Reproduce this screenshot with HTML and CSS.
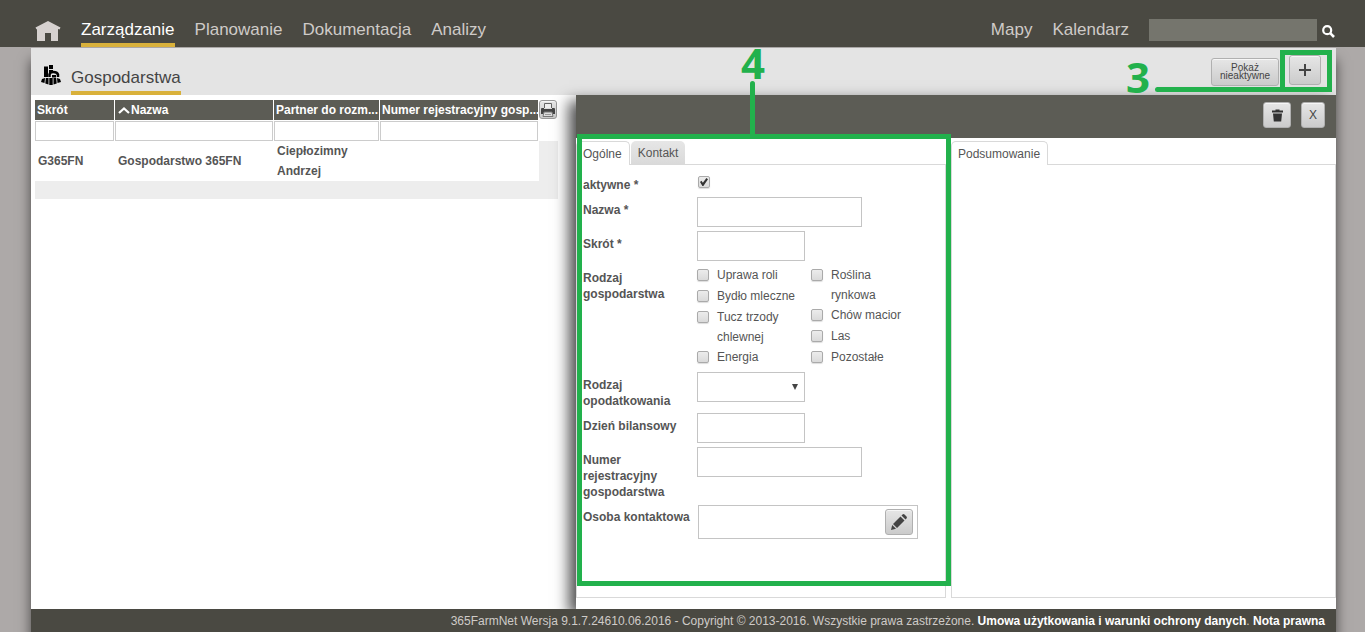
FILE: index.html
```html
<!DOCTYPE html>
<html lang="pl">
<head>
<meta charset="utf-8">
<title>365FarmNet – Gospodarstwa</title>
<link rel="stylesheet" href="styles.css">
</head>
<body>
<header class="topbar">
  <a class="home" href="#" aria-label="Start">
    <svg width="26" height="20" viewBox="0 0 26 20"><path d="M13 0 25.500 6.500 24.500 8.500 23 8V20H16V12H10V20H2V8L1.500 8.500.500 6.500Z" fill="#d6d1cf"/></svg>
  </a>
  <nav class="nav">
    <a class="nav-link is-active" href="#">Zarządzanie</a>
    <a class="nav-link" href="#">Planowanie</a>
    <a class="nav-link" href="#">Dokumentacja</a>
    <a class="nav-link" href="#">Analizy</a>
  </nav>
  <nav class="nav nav-right">
    <a class="nav-link" href="#">Mapy</a>
    <a class="nav-link" href="#">Kalendarz</a>
  </nav>
  <form class="search">
    <input class="search-input" type="search" aria-label="Szukaj">
    <button class="search-btn" type="button" aria-label="Szukaj">
      <svg width="13" height="13" viewBox="0 0 13 13" fill="none" stroke="#fff"><circle cx="5.200" cy="5.200" r="4" stroke-width="2.200"/><path d="M8.200 8.200 12 12" stroke-width="2.600"/></svg>
    </button>
  </form>
</header>

<div class="page">
  <div class="subbar">
    <svg class="farm-icon" width="20" height="20" viewBox="0 0 20 20">
      <path d="M3 1.500H7V12H3ZM8 0H12V4H8ZM8 5H12V6L8 9Z" fill="#000"/>
      <path d="M8.500 12V9.500Q9 7 12.500 7T17 9.500V12" fill="none" stroke="#000" stroke-width="2.500"/>
      <path d="M11 10H15V12.500H11Z" fill="#000"/>
      <path d="M1 14 4 13 3.500 18 0 17ZM4.800 13H7.500V19.500L4.300 18.500ZM8.300 13H11.700V20H8.300ZM12.500 13H15.200L15.700 18.500 12.500 19.500ZM16 13 19 14 20 17 16.500 18Z" fill="#000"/>
    </svg>
    <h1 class="title">Gospodarstwa</h1>
    <div class="subbar-actions">
      <div class="callout-number callout-three">3</div>
      <div class="callout-line-three"></div>
      <button class="btn btn-toggle" type="button">Pokaż nieaktywne</button>
      <div class="add">
        <button class="btn btn-add" type="button" aria-label="Dodaj">
          <svg width="12" height="12" viewBox="0 0 12 12"><path d="M6 0V12M0 6H12" stroke="#444" stroke-width="2"/></svg>
        </button>
        <div class="add-frame"></div>
      </div>
    </div>
  </div>

  <div class="workspace">
    <section class="list">
      <table class="farms">
        <colgroup><col class="c-short"><col class="c-name"><col class="c-partner"><col class="c-number"><col class="c-tools"></colgroup>
        <thead>
          <tr class="head-row">
            <th scope="col">Skrót</th>
            <th scope="col"><svg class="sort" width="12" height="7" viewBox="0 0 12 7"><path d="M1 6 6 1.500 11 6" fill="none" stroke="#fff" stroke-width="2.200"/></svg>Nazwa</th>
            <th scope="col">Partner do rozm...</th>
            <th scope="col">Numer rejestracyjny gosp...</th>
            <td class="tools">
              <button class="btn btn-print" type="button" aria-label="Drukuj">
                <svg width="14" height="14" viewBox="0 0 14 14"><path d="M3.500 5V.500H10.500V5" fill="#eee" stroke="#666" /><path d="M1 5H3V6H11V5H13Q14 5 14 6V11H0V6Q0 5 1 5Z" fill="#444"/><path d="M3 9H11L12 13.500H2Z" fill="#ddd" stroke="#777"/><path d="M4 11.500H10" stroke="#999"/></svg>
              </button>
            </td>
          </tr>
          <tr class="filter-row">
            <td><input class="filter" type="text" aria-label="Filtr: skrót"></td>
            <td><input class="filter" type="text" aria-label="Filtr: nazwa"></td>
            <td><input class="filter" type="text" aria-label="Filtr: partner"></td>
            <td><input class="filter" type="text" aria-label="Filtr: numer"></td>
            <td></td>
          </tr>
        </thead>
        <tbody>
          <tr class="data-row">
            <td>G365FN</td>
            <td>Gospodarstwo 365FN</td>
            <td>Ciepłozimny Andrzej</td>
            <td></td>
            <td class="filler"></td>
          </tr>
          <tr><td class="filler filler-row" colspan="5"></td></tr>
        </tbody>
      </table>
    </section>

    <section class="detail">
      <div class="detail-bar">
        <button class="btn btn-trash" type="button" aria-label="Usuń">
          <svg width="11" height="13" viewBox="0 0 11 13" fill="#333"><path d="M0 1.500H3.500V.500H7.500V1.500H11V3.500H0ZM1 4.500H10L9.200 12.500H1.800Z"/></svg>
        </button>
        <button class="btn btn-close" type="button">X</button>
      </div>
      <div class="panels">
        <div class="panel">
          <div class="tabs" role="tablist">
            <button class="tab is-active" type="button" role="tab" aria-selected="true">Ogólne</button>
            <button class="tab" type="button" role="tab" aria-selected="false">Kontakt</button>
          </div>
          <form class="panel-body form">
            <label class="label" for="active">aktywne *</label>
            <div class="field-check"><input class="check" id="active" type="checkbox" checked></div>

            <label class="label" for="name">Nazwa *</label>
            <input class="text text-wide" id="name" type="text">

            <label class="label" for="short">Skrót *</label>
            <input class="text" id="short" type="text">

            <div class="label" id="kind">Rodzaj gospodarstwa</div>
            <div class="kinds" role="group" aria-labelledby="kind">
              <div class="kind-col">
                <label class="option"><input class="check" type="checkbox"><span>Uprawa roli</span></label>
                <label class="option"><input class="check" type="checkbox"><span>Bydło mleczne</span></label>
                <label class="option"><input class="check" type="checkbox"><span>Tucz trzody chlewnej</span></label>
                <label class="option"><input class="check" type="checkbox"><span>Energia</span></label>
              </div>
              <div class="kind-col">
                <label class="option"><input class="check" type="checkbox"><span>Roślina rynkowa</span></label>
                <label class="option"><input class="check" type="checkbox"><span>Chów macior</span></label>
                <label class="option"><input class="check" type="checkbox"><span>Las</span></label>
                <label class="option"><input class="check" type="checkbox"><span>Pozostałe</span></label>
              </div>
            </div>

            <label class="label" for="tax">Rodzaj opodatkowania</label>
            <div class="select-wrap">
              <select class="text select" id="tax"><option></option></select>
              <svg class="arrow" width="6" height="6" viewBox="0 0 6 6"><path d="M0 0H6L3 6Z" fill="#444"/></svg>
            </div>

            <label class="label" for="day">Dzień bilansowy</label>
            <input class="text" id="day" type="text">

            <label class="label" for="number">Numer rejestracyjny gospodarstwa</label>
            <input class="text text-wide" id="number" type="text">

            <label class="label" for="person">Osoba kontaktowa</label>
            <div class="person">
              <input class="person-input" id="person" type="text">
              <button class="btn btn-edit" type="button" aria-label="Edytuj">
                <svg width="16" height="16" viewBox="0 0 16 16" fill="#444"><path d="M0 16 1.200 11 5 14.800ZM2 10 9.500 2.500 13.500 6.500 6 14ZM10.500 1.500 11.500.500Q12.500-.300 13.500.500L15.500 2.500Q16.300 3.500 15.500 4.500L14.500 5.500Z"/></svg>
              </button>
            </div>
          </form>
          <div class="callout-number callout-four">4</div>
          <div class="callout-line-four"></div>
          <div class="panel-frame"></div>
        </div>
        <div class="panel">
          <div class="tabs" role="tablist">
            <button class="tab is-active" type="button" role="tab" aria-selected="true">Podsumowanie</button>
          </div>
          <div class="panel-body"></div>
        </div>
      </div>
    </section>
  </div>

  <footer class="footer">365FarmNet Wersja 9.1.7.24610.06.2016 - Copyright © 2013-2016. Wszystkie prawa zastrzeżone. <a class="footer-link" href="#">Umowa użytkowania i warunki ochrony danych</a>. <a class="footer-link" href="#">Nota prawna</a></footer>
</div>
</body>
</html>
```

FILE: styles.css
```css
* {
  box-sizing: border-box;
}

body {
  margin: 0;
  min-height: 100vh;
  display: flex;
  flex-direction: column;
  background: #ada9a8;
  color: #555;
  font: 12px/16px "Liberation Sans", Arial, sans-serif;
}

input,
select,
button {
  margin: 0;
  padding: 0;
  font: inherit;
  color: inherit;
}

svg {
  display: block;
}

/* Top navigation */
.topbar {
  position: relative;
  z-index: 3;
  display: flex;
  align-items: flex-start;
  height: 47px;
  padding: 0 30px 0 35px;
  background: #4a4942;
}

.home {
  margin: 21px 20px 0 0;
}

.nav {
  display: flex;
  gap: 20px;
}

.nav-right {
  margin-left: auto;
}

.nav-link {
  padding-top: 16px;
  border-bottom: 4px solid transparent;
  color: #cfcbc8;
  font-size: 17px;
  line-height: 27px;
  text-decoration: none;
}

.nav-link.is-active {
  border-color: #d9b13b;
  color: #fff;
}

.search {
  display: flex;
  align-items: center;
  gap: 5px;
  margin: 19px 0 0 20px;
}

.search-input {
  width: 168px;
  height: 22px;
  border: 0;
  background: #75756d;
}

.search-btn {
  border: 0;
  background: none;
  padding-top: 3px;
}

/* Page frame */
.page {
  flex: 1;
  display: flex;
  flex-direction: column;
  margin: 1px 29px 0 31px;
  background: #fff;
  box-shadow: 0 12px 12px rgba(0, 0, 0, 0.6);
}

.subbar {
  display: flex;
  height: 47px;
  padding: 0 15px 0 10px;
  background: #e4e4e4;
}

.farm-icon {
  margin: 17px 10px 0 0;
}

.title {
  margin: 0;
  padding-top: 16px;
  border-bottom: 4px solid #d9b13b;
  color: #444;
  font-size: 17px;
  font-weight: normal;
  line-height: 27px;
}

.subbar-actions {
  position: relative;
  z-index: 2;
  display: flex;
  align-items: center;
  gap: 10px;
  margin-left: auto;
}

.btn {
  display: flex;
  align-items: center;
  justify-content: center;
  border: 1px solid #b0b0b0;
  border-radius: 3px;
  background: linear-gradient(#e6e6e6, #cbcbcb);
  box-shadow: inset 0 1px #f6f6f6;
  color: #444;
}

.btn-toggle {
  width: 68px;
  height: 28px;
  font-size: 10px;
  line-height: 8px;
}

.add {
  position: relative;
  margin-bottom: 4px;
}

.btn-add {
  width: 32px;
  height: 30px;
}

.btn-trash,
.btn-edit {
  width: 28px;
  height: 26px;
}

.btn-close {
  width: 24px;
  height: 26px;
}

.btn-print {
  width: 18px;
  height: 19px;
  border-color: #999;
}

/* Two main columns */
.workspace {
  flex: 1;
  display: grid;
  grid-template-columns: 109fr 152fr;
}

.list {
  min-width: 0;
  padding: 5px 18px 0 4px;
}

.farms {
  width: 100%;
  table-layout: fixed;
  border-spacing: 0;
}

.c-short { width: 80px; }
.c-name { width: 159px; }
.c-partner { width: 106px; }
.c-number { width: 159px; }
.c-tools { width: 19px; }

.farms td {
  padding: 0;
}

.head-row th {
  height: 21px;
  padding: 0 0 0 2px;
  overflow: hidden;
  border: solid #fff;
  border-width: 0 1px 1px 0;
  background: #5c5c55;
  background-clip: padding-box;
  color: #fff;
  line-height: 20px;
  text-align: left;
  white-space: nowrap;
}

.sort {
  display: inline-block;
  margin: 0 1px;
  vertical-align: 0;
}

.farms .tools {
  vertical-align: top;
}

.farms .filter-row td {
  height: 20px;
  padding-right: 1px;
}

.filter {
  display: block;
  width: 100%;
  height: 20px;
  border: 1px solid #ccc;
}

.farms .data-row td {
  padding: 0 3px;
  font-weight: bold;
  line-height: 20px;
}

.farms .data-row td:nth-child(3) {
  padding-right: 20px;
}

.farms .filler {
  background: #ededed;
}

.filler-row {
  height: 18px;
}

/* Detail area */
.detail {
  display: flex;
  flex-direction: column;
  background: #fff;
  box-shadow: -7px 6px 14px rgba(0, 0, 0, 0.7);
  clip-path: inset(-60px 0 0 -30px);
}

.detail-bar {
  display: flex;
  gap: 10px;
  justify-content: flex-end;
  height: 43px;
  padding: 7px 11px 0;
  background: #5c5c55;
}

.panels {
  flex: 1;
  display: grid;
  grid-template-columns: 74fr 77fr;
  gap: 5px;
  padding: 3px 0 11px;
}

.panel {
  position: relative;
  display: flex;
  flex-direction: column;
  min-width: 0;
}

.tabs {
  position: relative;
  z-index: 1;
  display: flex;
  gap: 1px;
  height: 24px;
}

.tab {
  height: 23px;
  padding: 0 7px;
  border: 0;
  border-radius: 5px 5px 0 0;
  background: linear-gradient(#e6e6e6, #dadada);
}

.tab.is-active {
  height: 24px;
  padding: 0 7px 0 6px;
  border: 1px solid #d9d9d9;
  border-bottom: 0;
  background: #fff;
}

.panel-body {
  flex: 1;
  margin-top: -1px;
  border: 1px solid #d9d9d9;
}

/* Form */
.form {
  display: grid;
  grid-template-columns: 112px 1fr;
  align-content: start;
  align-items: start;
  gap: 4px 2px;
  padding: 7px 6px;
}

.label {
  padding-top: 5px;
  font-weight: bold;
}

.field-check {
  padding: 4px 0 0 1px;
}

.check {
  flex: none;
  display: grid;
  place-items: center;
  appearance: none;
  width: 12px;
  height: 12px;
  border: 1px solid #aaa;
  border-radius: 2px;
  background: linear-gradient(#ececec, #dadada);
  box-shadow: 0 1px 1px #ddd;
}

.check:checked::before {
  content: "";
  width: 8px;
  height: 8px;
  background: #333;
  clip-path: polygon(0 50%, 18% 35%, 36% 58%, 80% 0, 100% 16%, 42% 100%, 30% 100%);
}

.text {
  display: block;
  width: 108px;
  height: 30px;
  padding: 0 6px;
  border: 1px solid #c4c4c4;
  border-radius: 0;
  background: #fff;
}

.text-wide {
  width: 165px;
}

.kinds {
  display: flex;
}

.kind-col {
  width: 114px;
}

.option {
  display: flex;
  gap: 8px;
  min-height: 21px;
  line-height: 20px;
}

.option .check {
  margin-top: 4px;
}

.option span {
  width: 84px;
}

.select-wrap {
  position: relative;
  width: 108px;
}

.select {
  appearance: none;
}

.arrow {
  position: absolute;
  top: 12px;
  right: 7px;
  pointer-events: none;
}

.person {
  display: flex;
  align-items: center;
  width: 220px;
  height: 34px;
  margin: 1px 0 0 1px;
  padding-right: 4px;
  border: 1px solid #c4c4c4;
}

.person-input {
  flex: 1;
  min-width: 0;
  height: 30px;
  border: 0;
}

/* Green guide marks laid over the interface */
.panel-frame,
.add-frame {
  position: absolute;
  border: 5px solid #22b14c;
  pointer-events: none;
}

.panel-frame {
  z-index: 2;
  inset: -7px -5px 12px 1px;
}

.add-frame {
  inset: -5px -11px -7px -9px;
}

.callout-number {
  position: absolute;
  color: #22b14c;
  font: bold 42px/42px "Open Sans", sans-serif;
}

.callout-three {
  top: 8px;
  right: 171px;
}

.callout-line-three {
  position: absolute;
  top: 39px;
  right: 39px;
  width: 127px;
  height: 5px;
  border-radius: 3px 0 0 3px;
  background: #22b14c;
}

.callout-four {
  top: -99px;
  left: 165px;
}

.callout-line-four {
  position: absolute;
  top: -60px;
  left: 174px;
  width: 5px;
  height: 55px;
  border-radius: 3px 3px 0 0;
  background: #22b14c;
}

/* Footer */
.footer {
  position: relative;
  z-index: 2;
  padding: 4px 11px 3px;
  background: #4a4942;
  color: #cfcbc8;
  text-align: right;
}

.footer-link {
  color: #fff;
  font-weight: bold;
  text-decoration: none;
}
```
